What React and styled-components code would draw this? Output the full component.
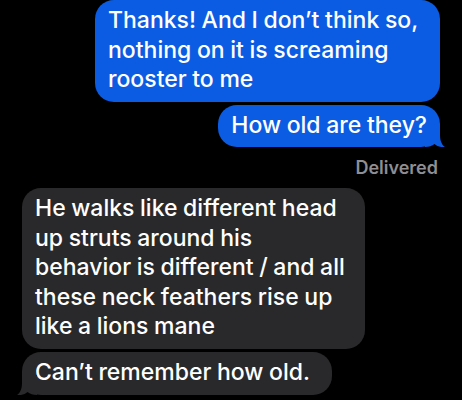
import React from "react";
import styled, { createGlobalStyle } from "styled-components";

const Global = createGlobalStyle`
  html, body { margin: 0; padding: 0; background: #000; }
  body { font-family: Inter, "Noto Sans", "Liberation Sans", sans-serif; }
`;

const Thread = styled.div`
  width: 462px;
  height: 400px;
  overflow: hidden;
  box-sizing: border-box;
  background: #000;
  padding: 0 22px;
  display: flex;
  flex-direction: column;
`;

const Bubble = styled.div`
  position: relative;
  box-sizing: border-box;
  align-self: ${(p) => (p.$out ? "flex-end" : "flex-start")};
  width: ${(p) => (p.$w ? `${p.$w}px` : "auto")};
  margin-top: ${(p) => p.$mt || 0}px;
  padding: 6px 13px 7px 13px;
  border-radius: 19px;
  background: ${(p) => (p.$out ? "#0b5ce2" : "#29292b")};
  color: #fff;
  font-size: 23px;
  line-height: 29.5px;
  font-weight: 500;
  letter-spacing: 0;
  word-spacing: -0.5px;
  white-space: nowrap;
`;

const Tail = styled.svg`
  position: absolute;
  bottom: 0;
  width: 20px;
  height: 20px;
  ${(p) => (p.$out ? "right: -5px;" : "left: -5px; transform: scaleX(-1);")}
  fill: ${(p) => (p.$out ? "#0b5ce2" : "#29292b")};
`;

const Status = styled.div`
  align-self: flex-end;
  margin-top: 11px;
  margin-right: 2px;
  margin-bottom: 10px;
  font-size: 18px;
  line-height: 20px;
  font-weight: 600;
  color: #8e8e93;
`;

const BubbleTail = ({ out }) => (
  <Tail $out={out} viewBox="0 0 20 20">
    <path d="M15 0 L15 8 C15 14 17 18 20 20 C16 20.5 12 19.5 9.5 17 C7 19 4 20 0 20 L0 0 Z" />
  </Tail>
);

export default function App() {
  return (
    <>
      <Global />
      <Thread>
        <Bubble $out $w={345}>
          Thanks! And I don’t think so,
          <br />
          nothing on it is screaming
          <br />
          rooster to me
        </Bubble>
        <Bubble $out $mt={3}>
          How old are they?
          <BubbleTail out />
        </Bubble>
        <Status>Delivered</Status>
        <Bubble $w={343}>
          He walks like different head
          <br />
          up struts around his
          <br />
          behavior is different / and all
          <br />
          these neck feathers rise up
          <br />
          like a lions mane
        </Bubble>
        <Bubble $w={310} $mt={3.5}>
          Can’t remember how old.
          <BubbleTail />
        </Bubble>
      </Thread>
    </>
  );
}
